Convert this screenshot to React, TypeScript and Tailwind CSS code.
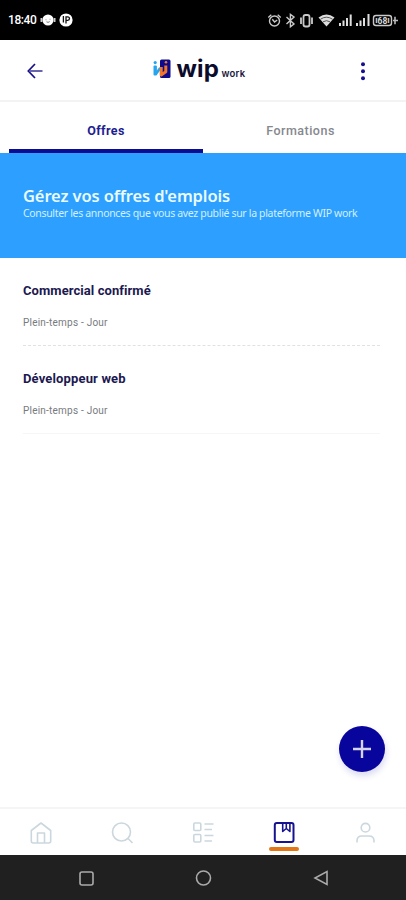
import type { ReactNode } from 'react';

const offers = [
  { id: 1, title: 'Commercial confirmé', type: 'Plein-temps - Jour', titleClass: 'tracking-[0.07px]' },
  { id: 2, title: 'Développeur web', type: 'Plein-temps - Jour', titleClass: 'tracking-[0.15px]' },
];

function StatusBar() {
  return (
    <div className="flex h-10 shrink-0 items-center justify-between bg-black pl-2 pr-[6px] text-white">
      <div className="flex items-center">
        <span className="w-[28px] whitespace-nowrap font-[Roboto,sans-serif] text-[12px] font-medium leading-[14px] tracking-[-0.4px]">18:40</span>
        <svg className="ml-1" width="16" height="14" viewBox="0 0 16 14">
          <circle cx="8" cy="7" r="5.6" fill="#fff" />
          <path d="M1.4 5v4M14.6 5v4" stroke="#ccc" strokeWidth="1.8" />
          <path d="M6 6.4v.8M10 5.8v.8M6.5 8.8q1.6 1.2 3.2-.2" fill="none" stroke="#777" />
        </svg>
        <svg className="ml-[3px]" width="14" height="14" viewBox="0 0 14 14">
          <circle cx="7" cy="7" r="6.6" fill="#fff" />
          <path d="M4.4 3v6.5M7 7.4V3.9h1.8a1.7 1.7 0 0 1 0 3.4H7v3.2" fill="none" stroke="#111" strokeWidth="1.3" />
        </svg>
      </div>
      <svg width="134" height="16" viewBox="266 12 134 16" fill="none" stroke="#c9c9c9" strokeWidth="1.4">
        <circle cx="274.5" cy="21" r="5" />
        <path d="M268.3 17.5l3-2.7M280.7 17.5l-3-2.7M272.3 19.3l2.3 2.7 2.6-2" />
        <path d="M286.5 17l7.5 7-3.6 2.8V14.4l3.6 2.6-7.5 7" />
        <rect x="303.5" y="15" width="6" height="11.5" rx="2" strokeWidth="1.8" />
        <path d="M301 17.5v6.5M312 17.5v6.5" strokeWidth="1.8" />
        <path d="M318.5 17.5Q326.5 11.5 334.5 17.5L326.5 26.5z" fill="#dedede" stroke="none" />
        <path d="M320.5 19.2q6-4 12 0M323 21.8q3.5-2.2 7 0" stroke="#333" strokeWidth=".8" />
        <path d="M340 26v-3M343.5 26v-5.5M347 26v-8M350.7 26V14.5M357 26v-3M360.5 26v-5.5M364 26v-8M368.5 26V14" stroke="#dedede" strokeWidth="2" />
        <rect x="373.5" y="15.5" width="18" height="10" rx="2.5" />
        <path d="M376.5 18v5M388.5 18v5M395 16.8v7.4M393 20.5h5" stroke="#bbb" strokeWidth="1.6" />
        <text x="382.5" y="24" textAnchor="middle" fill="#ddd" stroke="none" className="font-[Roboto,sans-serif] text-[8.5px] font-bold">68</text>
      </svg>
    </div>
  );
}

function Logo() {
  return (
    <div className="flex items-center">
      <svg width="18" height="20" viewBox="0 0 18 20">
        <rect x="7" y=".5" width="10.5" height="18.5" rx="1.5" fill="#0d0b8c" />
        <rect x=".5" y="6.5" width="3.4" height="10" rx="1" fill="#25a5ef" />
        <circle cx="2.2" cy="3.6" r="1.6" fill="#25a5ef" />
        <path d="M2.6 15.4L7.2 9" fill="none" stroke="#25a5ef" strokeWidth="2.6" />
        <path d="M8.2 8v8l4.6-3.2V6.5" fill="none" stroke="#f2762a" strokeWidth="3" strokeLinejoin="round" />
        <circle cx="13" cy="3.2" r="1.3" fill="#f2762a" />
      </svg>
      <span className="ml-[6px] w-[45px] whitespace-nowrap font-[Inter,sans-serif] text-[24px] font-bold leading-[24px] tracking-[0.2px] text-[#0b0b2c]">wip</span>
      <span className="mt-[9px] w-[25px] whitespace-nowrap font-[Inter,sans-serif] text-[9.5px] font-semibold leading-3 tracking-[0.2px] text-[#17163c]">work</span>
    </div>
  );
}

function Header() {
  return (
    <header className="flex h-[62px] shrink-0 items-center justify-between border-b-2 border-[#f3f3f5] pl-[27px] pr-[39px]">
      <svg className="mt-[2px]" width="16" height="16" viewBox="0 0 16 16" fill="none" stroke="#16108c" strokeWidth="1.7">
        <path d="M8 1L1.3 8 8 15" />
        <path d="M2 8h13.5" stroke="#4d4aa0" />
      </svg>
      <div className="mr-[3px] mt-[-2px]">
        <Logo />
      </div>
      <svg className="mt-[2px]" width="8" height="20" viewBox="0 0 8 20" fill="#16108c">
        <circle cx="4" cy="3.3" r="2" />
        <circle cx="4" cy="10.3" r="2" />
        <circle cx="4" cy="17.3" r="2" />
      </svg>
    </header>
  );
}

function Tabs() {
  return (
    <div className="flex h-[51px] shrink-0 pl-[9px] font-[Roboto,sans-serif] text-[12.5px] leading-[15px]">
      <button className="h-full w-[194px] border-b-4 border-[#090d91] pt-[9px] font-bold tracking-[0.4px] text-[#211d91]">Offres</button>
      <button className="h-full w-[195px] pt-[5px] font-medium tracking-[0.5px] text-[#85888e]">Formations</button>
    </div>
  );
}

function Banner() {
  return (
    <section className="h-[105px] shrink-0 whitespace-nowrap bg-[#2d9fff] pl-[23px] pt-[32px] font-['Noto_Sans',sans-serif] text-[#e9fbff]">
      <h1 className="text-[16.5px] font-semibold leading-[22px] tracking-[-0.12px]">Gérez vos offres d'emplois</h1>
      <p className="text-[10.5px] leading-[13px] tracking-[-0.33px] text-[#d2f0ff]">Consulter les annonces que vous avez publié sur la plateforme WIP work</p>
    </section>
  );
}

function NavIcon({ children, active = false }: { children: ReactNode; active?: boolean }) {
  return (
    <button className={`flex w-[81px] flex-col items-center pt-[12px] ${active ? 'text-[#17138e]' : 'text-[#cbd7de]'}`}>
      <svg width="24" height="24" viewBox="0 0 24 24" fill="none" stroke="currentColor" strokeWidth={active ? 2 : 1.6} strokeLinejoin="round">
        {children}
      </svg>
      {active && <span className="mt-[2px] h-[4px] w-[30px] rounded-xs bg-[#e17717]" />}
    </button>
  );
}

function BottomNav() {
  return (
    <nav className="flex h-[48px] shrink-0 border-t-2 border-[#f5f5f7]">
      <NavIcon>
        <path d="M2.3 9.5L12 2l9.7 7.5V20q0 2-2 2H4.3q-2 0-2-2z" />
        <path d="M8.5 22V12h7v10" />
      </NavIcon>
      <NavIcon>
        <circle cx="11.5" cy="11" r="9" />
        <path d="M18 17.5l4.5 4.5" />
      </NavIcon>
      <NavIcon>
        <rect x="2.8" y="2" width="7" height="7.5" rx="1" />
        <rect x="2.8" y="13.5" width="7" height="7.5" rx="1" />
        <path d="M13.5 3h9M13.5 8.5h7.5M13.5 14.5h9M13.5 20h7.5" />
      </NavIcon>
      <NavIcon active>
        <rect x="2.8" y="2" width="18.7" height="19" rx="2" />
        <path d="M10.7 3v7.5l3.6-3 3.6 3V3M14.3 3v4" strokeWidth="1.6" />
      </NavIcon>
      <NavIcon>
        <circle cx="12.5" cy="6.7" r="4.3" />
        <path d="M4 21.5v-1.5q0-5 5-5h7q5 0 5 5v1.5" />
      </NavIcon>
    </nav>
  );
}

function SystemNav() {
  return (
    <div className="flex h-[45px] shrink-0 items-center bg-[#202020] pl-[78px]">
      <svg width="252" height="18" viewBox="78 869 252 18" fill="none" stroke="#aaa" strokeWidth="1.6">
        <rect x="80" y="872" width="13" height="13" rx="2" />
        <circle cx="203.5" cy="878" r="7" />
        <path d="M327 871.5v13l-12-6.5z" />
      </svg>
    </div>
  );
}

export default function App() {
  return (
    <div className="relative flex h-[900px] w-[406px] flex-col overflow-hidden bg-white font-[Roboto,sans-serif]">
      <StatusBar />
      <Header />
      <Tabs />
      <Banner />
      <main className="flex-1 pl-[23px] pr-[26px]">
        {offers.map((offer) => (
          <article key={offer.id} className="h-[88px] whitespace-nowrap border-b border-dashed border-[#dfe2e5] pt-[25px] last:border-solid last:border-[#f6f6f7]">
            <h2 className={`text-[13px] font-bold leading-4 text-[#1c1850] ${offer.titleClass}`}>{offer.title}</h2>
            <p className="mt-[18px] text-[10px] leading-3 tracking-[0.22px] text-[#777a7d]">{offer.type}</p>
          </article>
        ))}
      </main>
      <button className="absolute right-[21px] top-[726px] flex size-[46px] items-center justify-center rounded-full bg-[#08059d] shadow-[1px_4px_6px_#08059d25]">
        <svg width="18" height="18" viewBox="0 0 18 18" stroke="#d5d3e6" strokeWidth="2.4">
          <path d="M9 0v18M0 9h18" />
        </svg>
      </button>
      <BottomNav />
      <SystemNav />
    </div>
  );
}
